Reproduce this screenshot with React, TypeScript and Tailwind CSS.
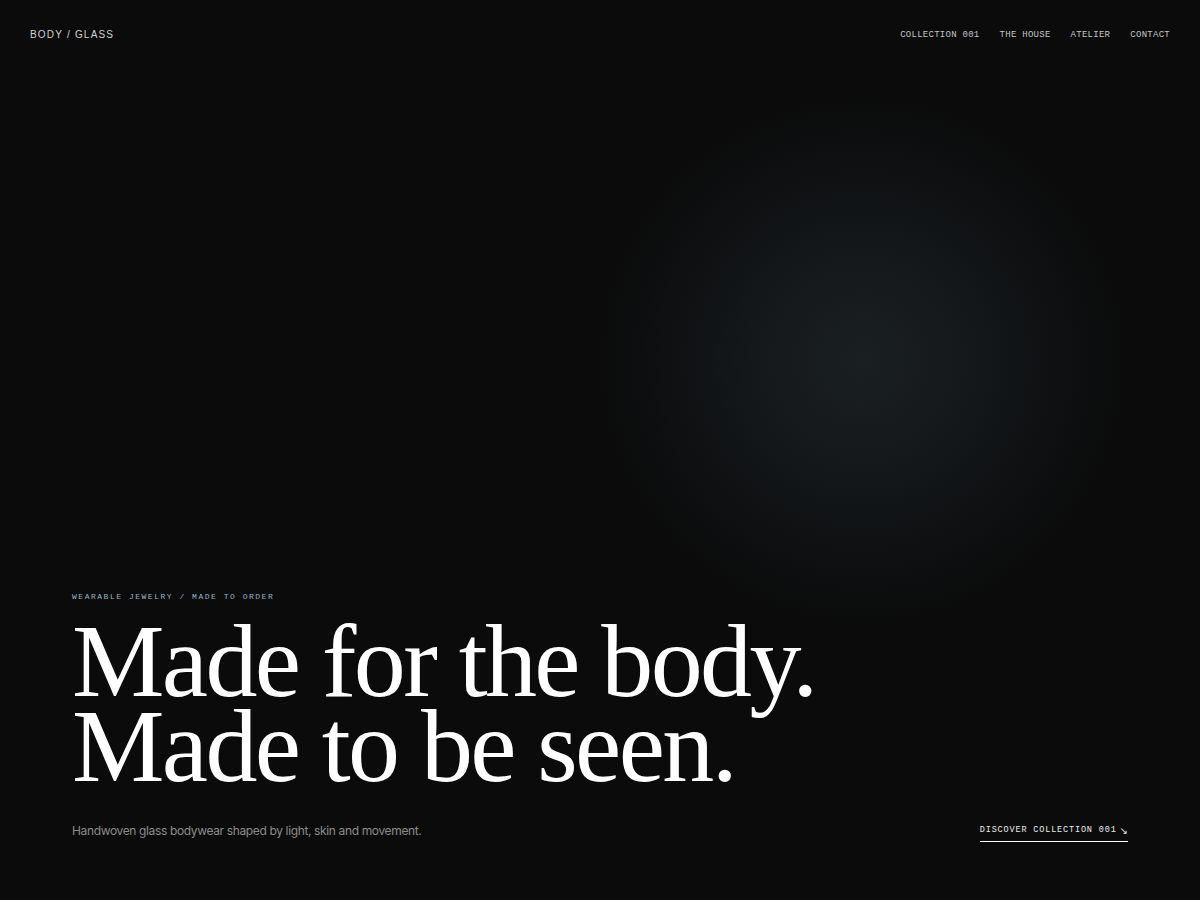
const mono = "font-['Liberation_Mono','DejaVu_Sans_Mono',monospace]";

const navItems = ["Collection 001", "The House", "Atelier", "Contact"];

function Header() {
  return (
    <header className="flex h-[68px] items-center justify-between px-[30px]">
      <a className="font-['Liberation_Sans',Arial,sans-serif] text-[10px] uppercase tracking-[0.12em] text-[#d2d2d2]">
        Body / Glass
      </a>
      <nav className={`flex items-center gap-[20px] pt-[4px] ${mono} text-[9px] uppercase tracking-[0.03em] text-[#c4c4c4]`}>
        {navItems.map((item) => (
          <a key={item}>{item}</a>
        ))}
      </nav>
    </header>
  );
}

export default function App() {
  return (
    <div className="flex h-[900px] w-full flex-col bg-[#0b0b0b] bg-[radial-gradient(circle_at_862px_360px,#1a1f22_0px,#14181a_110px,#0e1011_200px,#0b0b0b_265px)]">
      <Header />
      <main className="flex flex-1 flex-col justify-end px-[72px] pb-[58px]">
        <p className={`${mono} text-[8px] uppercase tracking-[0.19em] text-[#9ab4c4]`}>
          Wearable jewelry / Made to order
        </p>
        <h1 className="mt-[15px] font-['Liberation_Serif','Times_New_Roman',serif] text-[104px] leading-[85px] tracking-[-0.025em] text-white">
          Made for the body.
          <br />
          Made to be seen.
        </h1>
        <div className="mt-[34px] flex items-start justify-between">
          <p className="font-['Inter','Liberation_Sans',sans-serif] text-[12px] tracking-[-0.03em] text-[#8b8b8b]">
            Handwoven glass bodywear shaped by light, skin and movement.
          </p>
          <a className={`mt-[2px] flex items-center gap-[3px] border-b border-white pb-[4px] ${mono} text-[8.5px] uppercase tracking-[0.1em] text-[#ececec]`}>
            Discover Collection 001
            <span className="font-['DejaVu_Sans',sans-serif] text-[10px] leading-none tracking-normal">↘</span>
          </a>
        </div>
      </main>
    </div>
  );
}
